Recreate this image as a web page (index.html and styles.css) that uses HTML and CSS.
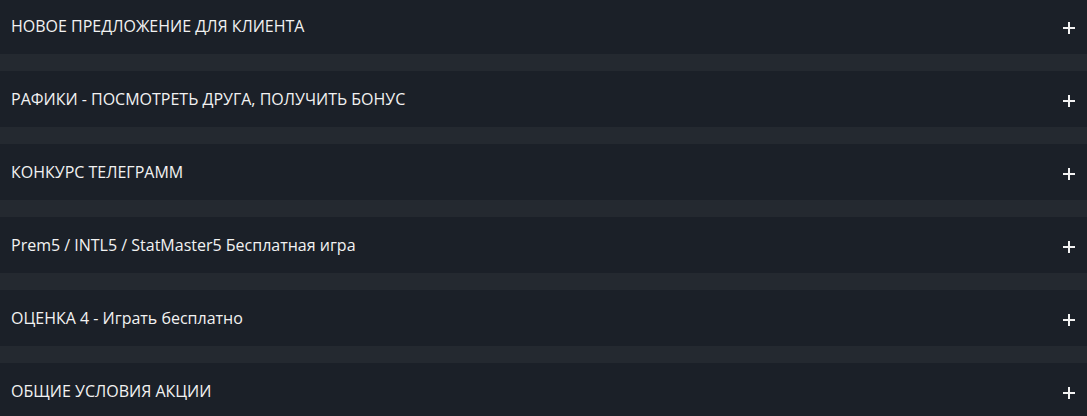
FILE: index.html
```html
<!DOCTYPE html>
<html lang="ru">
<head>
    <meta charset="UTF-8">
    <meta name="viewport" content="width=device-width, initial-scale=1.0">
    <title>Акции</title>
    <link rel="stylesheet" href="styles.css">
</head>
<body>
    <div class="accordion">
        <div class="acc-item"><span class="acc-title">НОВОЕ ПРЕДЛОЖЕНИЕ ДЛЯ КЛИЕНТА</span><span class="acc-plus"></span></div>
        <div class="acc-item"><span class="acc-title">РАФИКИ - ПОСМОТРЕТЬ ДРУГА, ПОЛУЧИТЬ БОНУС</span><span class="acc-plus"></span></div>
        <div class="acc-item"><span class="acc-title">КОНКУРС ТЕЛЕГРАММ</span><span class="acc-plus"></span></div>
        <div class="acc-item"><span class="acc-title">Prem5 / INTL5 / StatMaster5 Бесплатная игра</span><span class="acc-plus"></span></div>
        <div class="acc-item"><span class="acc-title">ОЦЕНКА 4 - Играть бесплатно</span><span class="acc-plus"></span></div>
        <div class="acc-item"><span class="acc-title">ОБЩИЕ УСЛОВИЯ АКЦИИ</span><span class="acc-plus"></span></div>
    </div>
</body>
</html>
```

FILE: styles.css
```css
body { margin: 0; background: #242930; font-family: "Open Sans", Arial, sans-serif; }
.accordion { display: flex; flex-direction: column; gap: 17px; margin-top: -2px; }
.acc-item { display: flex; align-items: center; justify-content: space-between; height: 56px; padding: 0 12px 0 11px; background: #1b2028; color: #f2f2f2; cursor: pointer; }
.acc-title { font-size: 16px; padding-bottom: 1px; }
.acc-plus { position: relative; width: 12px; height: 12px; margin-top: 4px; }
.acc-plus::before, .acc-plus::after { content: ""; position: absolute; background: #f2f2f2; }
.acc-plus::before { left: 0; right: 0; top: 5px; height: 2px; }
.acc-plus::after { top: 0; bottom: 0; left: 5px; width: 2px; }
```
